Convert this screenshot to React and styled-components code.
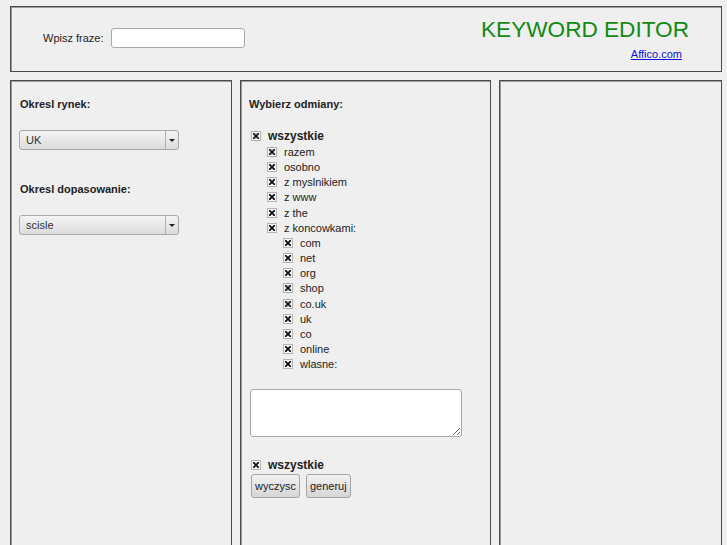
import React from 'react';
import styled, { createGlobalStyle } from 'styled-components';

const GlobalStyle = createGlobalStyle`
  html, body {
    margin: 0;
    padding: 0;
    background: #efefef;
    font-family: 'Liberation Sans', Arial, sans-serif;
    font-size: 11px;
    color: #222;
    overflow: hidden;
  }
`;

const Page = styled.div`
  padding: 6px 5px 0 10px;
`;

const Frame = styled.div`
  border: 1px solid #4a4a4a;
  box-shadow: inset 1px 1px 0 #9a9a9a;
  box-sizing: border-box;
`;

const Header = styled(Frame)`
  height: 66px;
  display: flex;
  align-items: center;
  justify-content: space-between;
  padding: 0 32px 0 32px;
`;

const PhraseRow = styled.label`
  display: flex;
  align-items: center;
  gap: 7px;
  margin-top: -2px;
`;

const TextInput = styled.input`
  width: 134px;
  height: 20px;
  box-sizing: border-box;
  border: 1px solid #a8a8a8;
  border-radius: 3px;
  background: #fff;
  padding: 0 4px;
  font: inherit;
`;

const Brand = styled.div`
  display: flex;
  flex-direction: column;
  align-items: flex-end;
  margin-top: -1px;
`;

const Title = styled.div`
  color: #128a12;
  font-size: 22.6px;
  line-height: 26px;
`;

const BrandLink = styled.a`
  color: #1010e0;
  text-decoration: underline;
  font-size: 11px;
  margin-top: 5px;
  margin-right: 7px;
`;

const Columns = styled.div`
  display: grid;
  grid-template-columns: 222px 251px 223px;
  gap: 8px;
  margin-top: 8px;
`;

const Column = styled(Frame)`
  min-height: 480px;
  padding: 16px 8px 0 8px;
`;

const Heading = styled.div`
  font-weight: bold;
  line-height: 14px;
  margin-left: ${p => p.$indent || 0}px;
  margin-bottom: ${p => p.$gap || 19}px;
`;

const SelectBox = styled.div`
  width: 160px;
  height: 20px;
  box-sizing: border-box;
  border: 1px solid #a9a9a9;
  border-radius: 3px;
  background: linear-gradient(#f4f4f4, #dcdcdc);
  display: flex;
  align-items: center;
  margin-bottom: ${p => p.$gap || 0}px;
`;

const SelectText = styled.span`
  flex: 1;
  padding-left: 6px;
  color: #333;
`;

const SelectArrow = styled.span`
  width: 12px;
  height: 100%;
  border-left: 1px solid #b0b0b0;
  display: flex;
  align-items: center;
  justify-content: center;
  &::after {
    content: '';
    border-left: 3px solid transparent;
    border-right: 3px solid transparent;
    border-top: 3px solid #222;
  }
`;

const CheckList = styled.div`
  display: flex;
  flex-direction: column;
`;

const CheckRow = styled.label`
  display: flex;
  align-items: center;
  gap: 7px;
  height: 15.2px;
  padding-left: ${p => 2 + p.$level * 16}px;
  font-weight: ${p => (p.$bold ? 'bold' : 'normal')};
  font-size: ${p => (p.$bold ? '12px' : '11px')};
  margin-bottom: ${p => (p.$bold ? 1 : 0)}px;
`;

const Box = styled.span`
  width: 10px;
  height: 10px;
  box-sizing: border-box;
  border: 1px solid #b5b5b5;
  background: #f6f6f6;
  display: inline-flex;
  align-items: center;
  justify-content: center;
`;

const Check = () => (
  <Box>
    <svg width="6" height="6" viewBox="0 0 6 6">
      <path d="M0.5 0.5 L5.5 5.5 M5.5 0.5 L0.5 5.5" stroke="#111" strokeWidth="1.8" strokeLinecap="square" />
    </svg>
  </Box>
);

const TextArea = styled.textarea`
  width: 212px;
  height: 48px;
  box-sizing: border-box;
  border: 1px solid #a8a8a8;
  border-radius: 3px;
  background: #fff;
  margin: 17px 0 20px 1px;
  display: block;
  resize: both;
`;

const Buttons = styled.div`
  display: flex;
  gap: 6px;
  margin-top: 2px;
  padding-left: 2px;
`;

const Button = styled.button`
  height: 24px;
  box-sizing: border-box;
  border: 1px solid #a5a5a5;
  border-radius: 3px;
  background: linear-gradient(#f2f2f2, #d6d6d6);
  font-family: 'Liberation Sans', Arial, sans-serif;
  font-size: 11px;
  color: #222;
  padding: 0 3px;
`;

const variants = [
  ['razem', 1], ['osobno', 1], ['z myslnikiem', 1], ['z www', 1], ['z the', 1],
  ['z koncowkami:', 1], ['com', 2], ['net', 2], ['org', 2], ['shop', 2],
  ['co.uk', 2], ['uk', 2], ['co', 2], ['online', 2], ['wlasne:', 2],
];

export default function App() {
  return (
    <Page>
      <GlobalStyle />
      <Header>
        <PhraseRow>
          Wpisz fraze:
          <TextInput type="text" />
        </PhraseRow>
        <Brand>
          <Title>KEYWORD EDITOR</Title>
          <BrandLink href="#">Affico.com</BrandLink>
        </Brand>
      </Header>
      <Columns>
        <Column>
          <Heading $indent={1}>Okresl rynek:</Heading>
          <SelectBox $gap={32}>
            <SelectText>UK</SelectText>
            <SelectArrow />
          </SelectBox>
          <Heading $indent={1}>Okresl dopasowanie:</Heading>
          <SelectBox>
            <SelectText>scisle</SelectText>
            <SelectArrow />
          </SelectBox>
        </Column>
        <Column>
          <Heading $gap={17}>Wybierz odmiany:</Heading>
          <CheckList>
            <CheckRow $level={0} $bold><Check />wszystkie</CheckRow>
            {variants.map(([name, level]) => (
              <CheckRow key={name} $level={level}><Check />{name}</CheckRow>
            ))}
          </CheckList>
          <TextArea />
          <CheckRow $level={0} $bold><Check />wszystkie</CheckRow>
          <Buttons>
            <Button>wyczysc</Button>
            <Button>generuj</Button>
          </Buttons>
        </Column>
        <Column />
      </Columns>
    </Page>
  );
}
